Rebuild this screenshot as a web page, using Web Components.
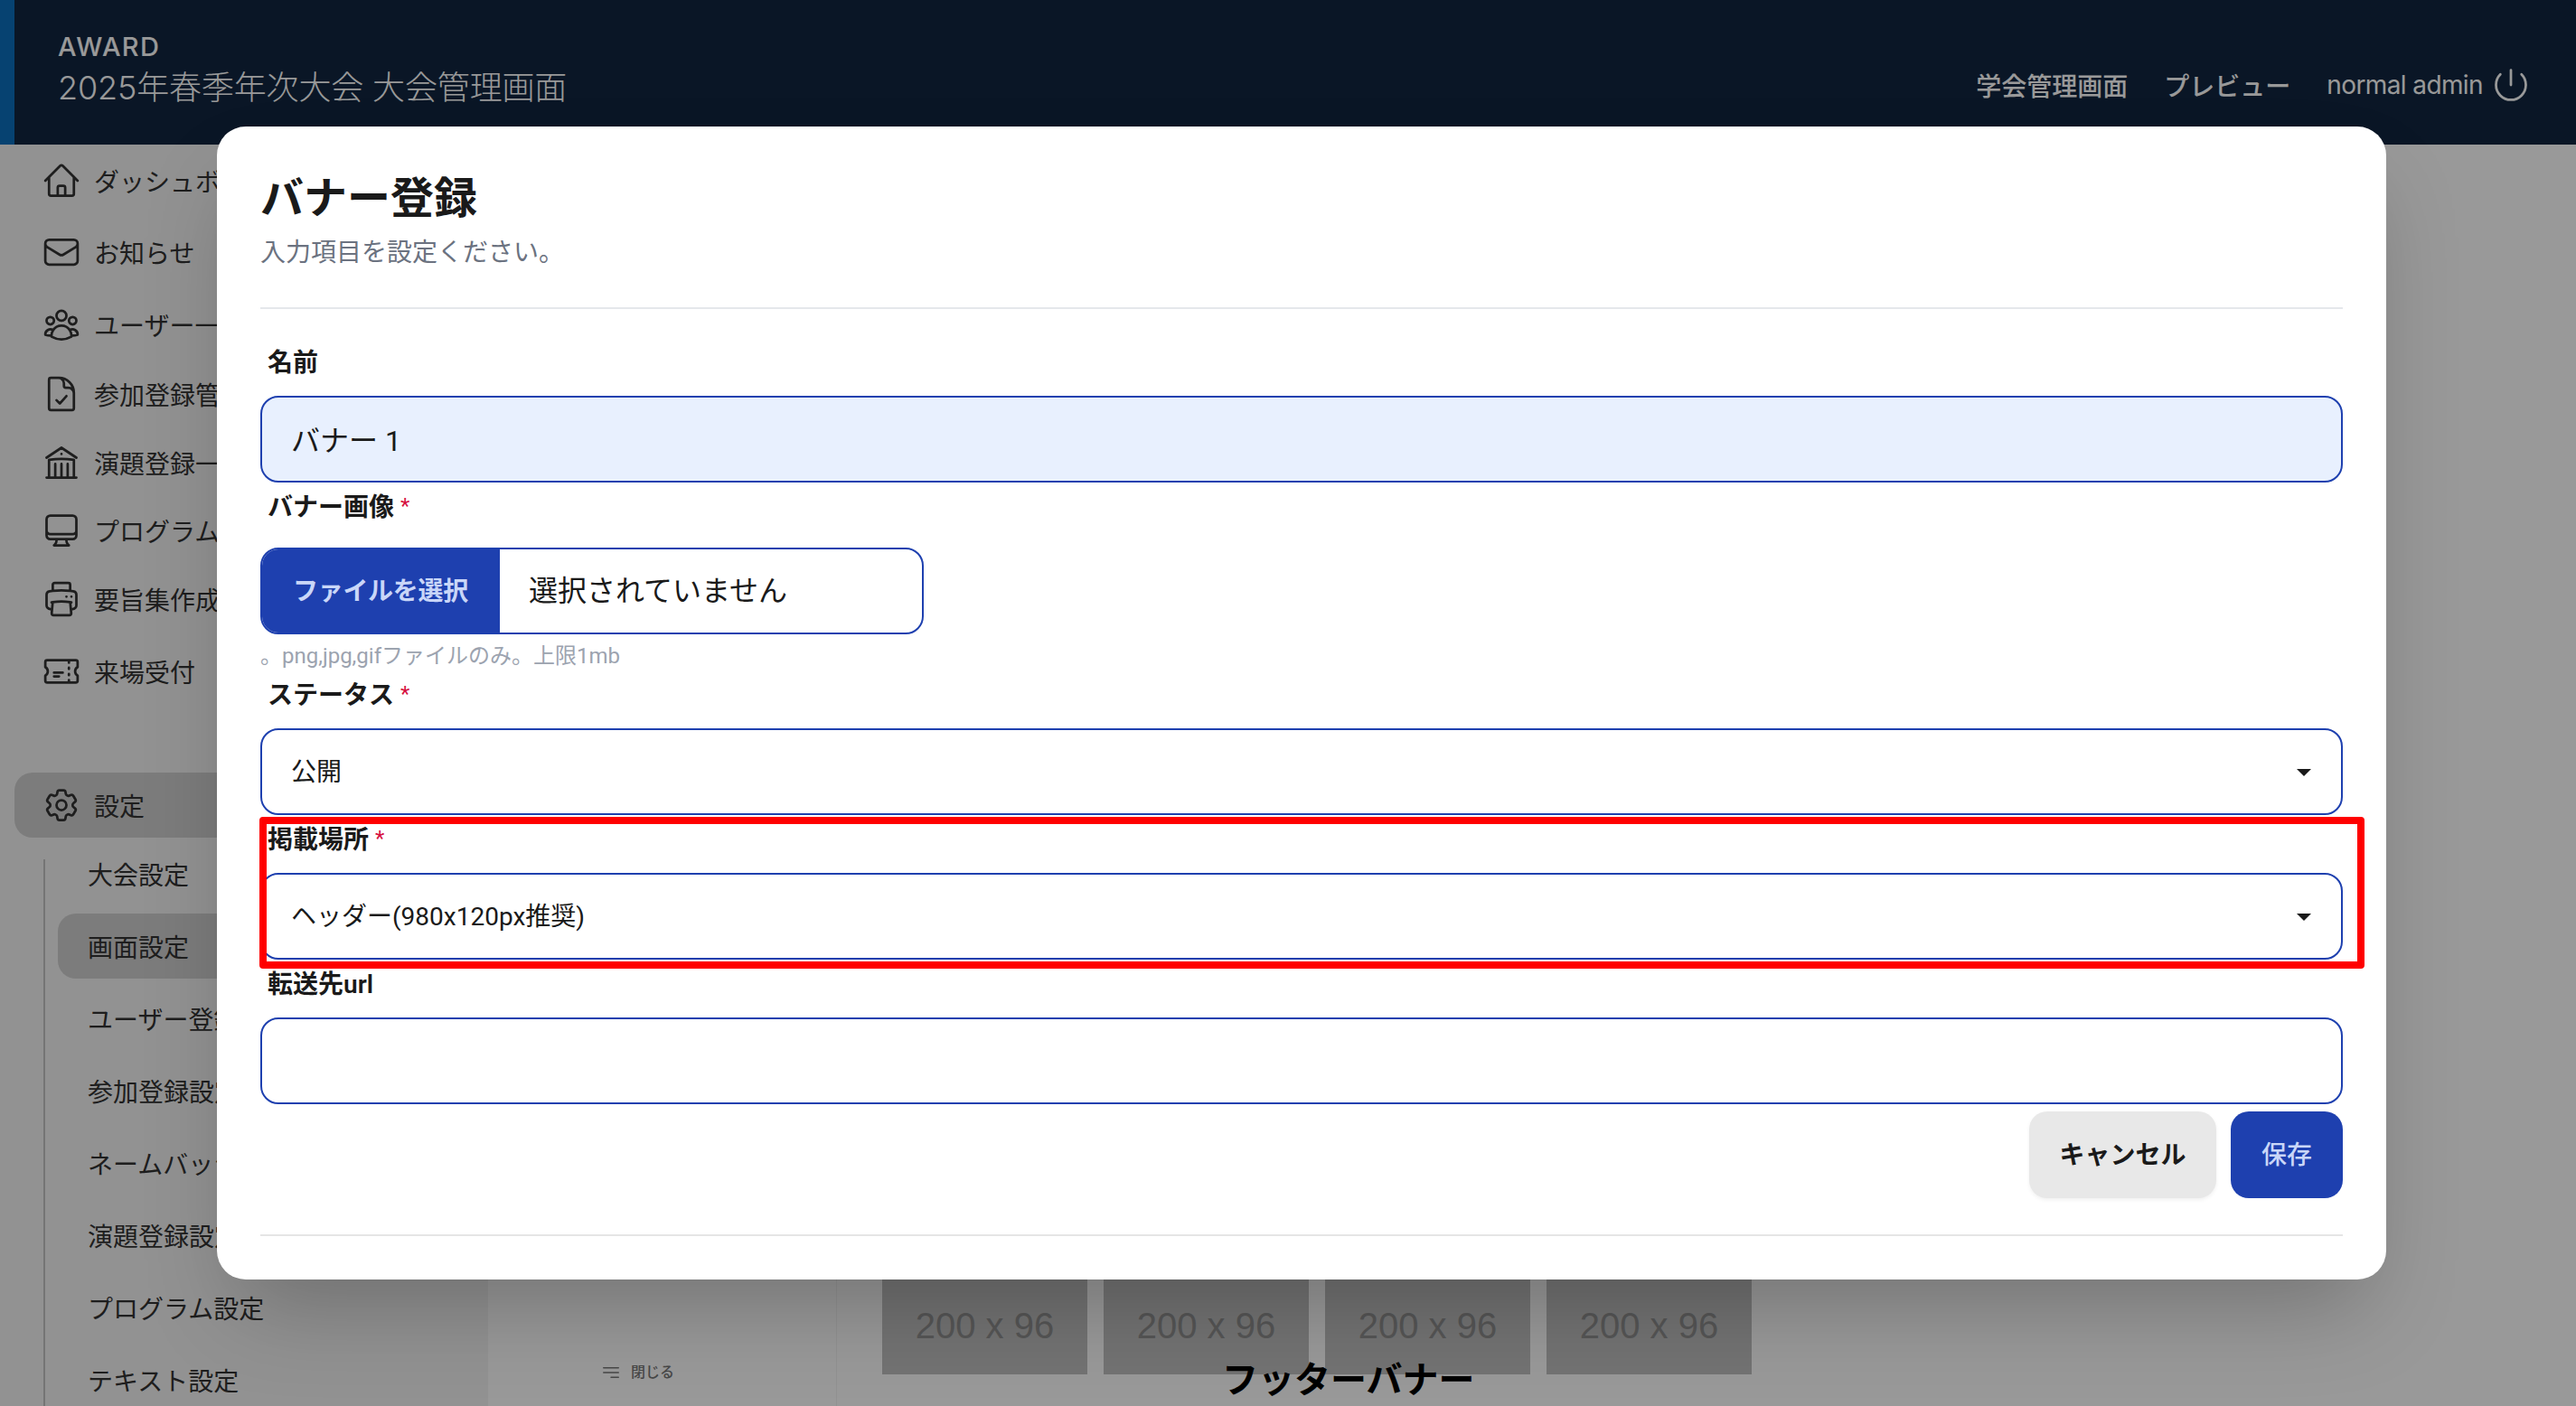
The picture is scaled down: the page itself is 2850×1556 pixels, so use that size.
<!DOCTYPE html>
<html lang="ja">
<head>
<meta charset="utf-8">
<title>バナー登録</title>
<style>
html,body{margin:0;padding:0;background:#fff}
body{font-family:Roboto,"Noto Sans CJK JP",sans-serif;width:2850px;height:1556px;overflow:hidden}
</style>
</head>
<body>
<admin-page>
  <app-header slot="header"></app-header>
  <app-sidebar slot="sidebar">
    <nav-item icon="home" style="--mt:0px">ダッシュボード</nav-item>
    <nav-item icon="mail" style="--mt:7px">お知らせ</nav-item>
    <nav-item icon="users" style="--mt:8px">ユーザー一覧</nav-item>
    <nav-item icon="doc" style="--mt:5px">参加登録管理</nav-item>
    <nav-item icon="bank" style="--mt:4px">演題登録一覧</nav-item>
    <nav-item icon="desktop" style="--mt:3px">プログラム管理</nav-item>
    <nav-item icon="printer" style="--mt:4px">要旨集作成</nav-item>
    <nav-item icon="ticket" style="--mt:8px">来場受付</nav-item>
    <nav-item icon="cog" active style="--mt:76px">設定</nav-item>
    <sub-nav>
      <sub-item style="--h:32px;--mb:28px">大会設定</sub-item>
      <sub-item active>画面設定</sub-item>
      <sub-item>ユーザー登録設定</sub-item>
      <sub-item>参加登録設定</sub-item>
      <sub-item>ネームバッジ設定</sub-item>
      <sub-item>演題登録設定</sub-item>
      <sub-item>プログラム設定</sub-item>
      <sub-item>テキスト設定</sub-item>
    </sub-nav>
  </app-sidebar>
  <side-panel slot="panel"></side-panel>
  <banner-area slot="main">
    <banner-ph>200 x 96</banner-ph>
    <banner-ph>200 x 96</banner-ph>
    <banner-ph>200 x 96</banner-ph>
    <banner-ph>200 x 96</banner-ph>
    <span slot="title">フッターバナー</span>
  </banner-area>
  <modal-dialog slot="modal" heading="バナー登録" sub="入力項目を設定ください。">
    <form-field label="名前"><text-box filled>バナー 1</text-box></form-field>
    <form-field label="バナー画像" required gap hint="。png,jpg,gifファイルのみ。上限1mb"><file-box></file-box></form-field>
    <form-field label="ステータス" required><select-box>公開</select-box></form-field>
    <form-field label="掲載場所" required marked><select-box>ヘッダー(980x120px推奨)</select-box></form-field>
    <form-field label="転送先url"><text-box></text-box></form-field>
    <action-btn slot="actions">キャンセル</action-btn>
    <action-btn slot="actions" primary>保存</action-btn>
  </modal-dialog>
</admin-page>

<script>
const ICONS = {
  home:'<path d="M2.25 12l8.954-8.955c.44-.439 1.152-.439 1.591 0L21.75 12M4.5 9.75v10.125c0 .621.504 1.125 1.125 1.125H9.75v-4.875c0-.621.504-1.125 1.125-1.125h2.25c.621 0 1.125.504 1.125 1.125V21h4.125c.621 0 1.125-.504 1.125-1.125V9.75M8.25 21h8.25"/>',
  mail:'<path d="M21.75 6.75v10.5a2.25 2.25 0 01-2.25 2.25h-15a2.25 2.25 0 01-2.25-2.25V6.75m19.5 0A2.25 2.25 0 0019.5 4.5h-15a2.25 2.25 0 00-2.25 2.25m19.5 0v.243a2.25 2.25 0 01-1.07 1.916l-7.5 4.615a2.25 2.25 0 01-2.36 0L3.32 8.91a2.25 2.25 0 01-1.07-1.916V6.75"/>',
  users:'<path d="M18 18.72a9.094 9.094 0 003.741-.479 3 3 0 00-4.682-2.72m.94 3.198l.001.031c0 .225-.012.447-.037.666A11.944 11.944 0 0112 21c-2.17 0-4.207-.576-5.963-1.584A6.062 6.062 0 016 18.719m12 0a5.971 5.971 0 00-.941-3.197m0 0A5.995 5.995 0 0012 12.75a5.995 5.995 0 00-5.058 2.772m0 0a3 3 0 00-4.681 2.72 8.986 8.986 0 003.74.477m.94-3.197a5.971 5.971 0 00-.94 3.197M15 6.75a3 3 0 11-6 0 3 3 0 016 0zm6 3a2.25 2.25 0 11-4.5 0 2.25 2.25 0 014.5 0zm-13.5 0a2.25 2.25 0 11-4.5 0 2.25 2.25 0 014.5 0z"/>',
  doc:'<path d="M10.125 2.25h-4.5c-.621 0-1.125.504-1.125 1.125v17.25c0 .621.504 1.125 1.125 1.125h12.75c.621 0 1.125-.504 1.125-1.125v-9M10.125 2.25h.375a9 9 0 019 9v.375M10.125 2.25A3.375 3.375 0 0113.5 5.625v1.5c0 .621.504 1.125 1.125 1.125h1.5a3.375 3.375 0 013.375 3.375M9 15.75l2 2 4-4.5"/>',
  bank:'<path d="M12 21v-8.25M15.75 21v-8.25M8.25 21v-8.25M3 9l9-6 9 6m-1.5 12V10.332A48.36 48.36 0 0012 9.75c-2.551 0-5.056.2-7.5.582V21M3 21h18M12 6.75h.008v.008H12V6.75z"/>',
  desktop:'<path d="M9 17.25v1.007a3 3 0 01-.879 2.122L7.5 21h9l-.621-.621A3 3 0 0115 18.257V17.25m6-12V15a2.25 2.25 0 01-2.25 2.25H5.25A2.25 2.25 0 013 15V5.25m18 0A2.25 2.25 0 0018.75 3H5.25A2.25 2.25 0 003 5.25m18 0V12a2.25 2.25 0 01-2.25 2.25H5.25A2.25 2.25 0 013 12V5.25"/>',
  printer:'<path d="M6.72 13.829c-.24.03-.48.062-.72.096m.72-.096a42.415 42.415 0 0110.56 0m-10.56 0L6.34 18m10.94-4.171c.24.03.48.062.72.096m-.72-.096L17.66 18m0 0l.229 2.523a1.125 1.125 0 01-1.12 1.227H7.231c-.662 0-1.18-.568-1.12-1.227L6.34 18m11.318 0h1.091A2.25 2.25 0 0021 15.75V9.456c0-1.081-.768-2.015-1.837-2.175a48.055 48.055 0 00-1.913-.247M6.34 18H5.25A2.25 2.25 0 013 15.75V9.456c0-1.081.768-2.015 1.837-2.175a48.041 48.041 0 011.913-.247m10.5 0a48.536 48.536 0 00-10.5 0m10.5 0V3.375c0-.621-.504-1.125-1.125-1.125h-8.25c-.621 0-1.125.504-1.125 1.125v3.659M18 10.5h.008v.008H18V10.5zm-3 0h.008v.008H15V10.5z"/>',
  ticket:'<path d="M16.5 6v.75m0 3v.75m0 3v.75m0 3V18m-9-5.25h5.25M7.5 15h3M3.375 5.25c-.621 0-1.125.504-1.125 1.125v3.026a2.999 2.999 0 010 5.198v3.026c0 .621.504 1.125 1.125 1.125h17.25c.621 0 1.125-.504 1.125-1.125v-3.026a2.999 2.999 0 010-5.198V6.375c0-.621-.504-1.125-1.125-1.125H3.375z"/>',
  cog:'<path d="M9.594 3.94c.09-.542.56-.94 1.11-.94h2.593c.55 0 1.02.398 1.11.94l.213 1.281c.063.374.313.686.645.87.074.04.147.083.22.127.324.196.72.257 1.075.124l1.217-.456a1.125 1.125 0 011.37.49l1.296 2.247a1.125 1.125 0 01-.26 1.431l-1.003.827c-.293.24-.438.613-.431.992a6.759 6.759 0 010 .255c-.007.378.138.75.43.99l1.005.828c.424.35.534.954.26 1.43l-1.298 2.247a1.125 1.125 0 01-1.369.491l-1.217-.456c-.355-.133-.75-.072-1.076.124a6.57 6.57 0 01-.22.128c-.331.183-.581.495-.644.869l-.213 1.28c-.09.543-.56.941-1.11.941h-2.594c-.55 0-1.02-.398-1.11-.94l-.213-1.281c-.062-.374-.312-.686-.644-.87a6.52 6.52 0 01-.22-.127c-.325-.196-.72-.257-1.076-.124l-1.217.456a1.125 1.125 0 01-1.369-.49l-1.297-2.247a1.125 1.125 0 01.26-1.431l1.004-.827c.292-.24.437-.613.43-.992a6.932 6.932 0 010-.255c.007-.378-.138-.75-.43-.99l-1.004-.828a1.125 1.125 0 01-.26-1.43l1.297-2.247a1.125 1.125 0 011.37-.491l1.216.456c.356.133.751.072 1.076-.124.072-.044.146-.087.22-.128.332-.183.582-.495.644-.869l.214-1.281z"/><path d="M15 12a3 3 0 11-6 0 3 3 0 016 0z"/>',
  power:'<path d="M5.636 5.636a9 9 0 1012.728 0M12 3v9"/>',
  bars:'<path d="M3.75 6.75h16.5M3.75 12h16.5M12 17.25h8.25"/>'
};
const svg = (n, s) => `<svg xmlns="http://www.w3.org/2000/svg" width="${s}" height="${s}" viewBox="0 0 24 24" fill="none" stroke="currentColor" stroke-width="1.5" stroke-linecap="round" stroke-linejoin="round" style="display:block;flex:none">${ICONS[n]}</svg>`;

class Base extends HTMLElement {
  connectedCallback() {
    if (this.shadowRoot) return;
    this.attachShadow({mode:'open'}).innerHTML = this.view();
  }
}
const def = (name, fn) => customElements.define(name, class extends Base { view() { return fn(this); } });

def('admin-page', () => `<style>
  :host{display:grid;position:relative;width:2850px;height:1556px;overflow:hidden;
    grid-template-columns:540px 386px 1fr;grid-template-rows:160px 1396px;color:#333}
  ::slotted([slot=header]){grid-column:1/-1}
  .overlay{position:absolute;inset:0;padding-left:30px;box-sizing:border-box;background:rgba(0,0,0,.4);display:flex;align-items:center;justify-content:center}
</style>
<slot name="header"></slot>
<slot name="sidebar"></slot>
<slot name="panel"></slot>
<slot name="main"></slot>
<div class="overlay"><slot name="modal"></slot></div>`);

def('app-header', () => `<style>
  :host{display:flex;justify-content:space-between;height:160px;box-sizing:border-box;background:#112640;border-left:16px solid #0a6ebd;color:#fff}
  .brand{padding:36px 0 0 48px}
  .logo{font:500 29px/32px Inter,sans-serif;letter-spacing:1.4px;height:32px}
  .title{font:300 36px/54px Inter,"Noto Sans CJK JP",sans-serif;margin-top:2px;white-space:pre;letter-spacing:-.15px}
  .right{display:flex;align-items:center;padding:28px 50px 0 0;font-size:28px;font-weight:500}
  .right a{margin-right:40px}
  .user{font:400 28px Inter,sans-serif;letter-spacing:-.6px;margin-right:9px}
</style>
<div class="brand"><div class="logo">AWARD</div><div class="title">2025年春季年次大会 大会管理画面</div></div>
<div class="right"><a>学会管理画面</a><a>プレビュー</a><span class="user">normal admin</span>${svg('power',44)}</div>`);

def('app-sidebar', () => `<style>
  :host{display:block;background:#f3f3f3;padding-top:4px;overflow:hidden;box-sizing:border-box}
</style><slot></slot>`);

def('nav-item', el => `<style>
  :host{display:flex;align-items:center;height:72px;margin:var(--mt,0) 16px 0 16px;padding-left:30px;border-radius:20px;font-size:28px;white-space:nowrap;color:#333;gap:14px}
  :host([active]){background:#cfcfcf}
</style>${svg(el.getAttribute('icon'),44)}<slot></slot>`);

def('sub-nav', () => `<style>
  :host{display:block;margin:24px 0 0 48px;padding-left:14px;border-left:2px solid #c4c4c4}
</style><slot></slot>`);

def('sub-item', () => `<style>
  :host{display:flex;align-items:center;height:var(--h,72px);margin:0 16px var(--mb,8px) 0;padding-left:33px;border-radius:20px;font-size:28px;white-space:nowrap;color:#333}
  :host([active]){background:#cfcfcf}
</style><slot></slot>`);

def('side-panel', () => `<style>
  :host{display:flex;align-items:flex-end;box-sizing:border-box;background:#fff;border-right:1px solid #f2f2f2;padding:0 0 25px 124px;gap:10px;font-size:16px;line-height:24px;font-weight:500;color:#777}
</style>${svg('bars',24)}<span>閉じる</span>`);

def('banner-area', () => `<style>
  :host{display:block;background:#fff;padding:1253px 0 0 50px;overflow:hidden}
  .row{display:flex;gap:18px}
  .title{margin:-13px 0 0 376px;font-size:40px;line-height:40px;font-weight:700;color:#000;position:relative}
</style><div class="row"><slot></slot></div><div class="title"><slot name="title"></slot></div>`);

def('banner-ph', () => `<style>
  :host{display:flex;align-items:center;justify-content:center;width:227px;height:108px;background:#c0c0c0;color:#8f8f8f;font:40px "Liberation Sans",sans-serif}
</style><slot></slot>`);

def('modal-dialog', el => `<style>
  :host{display:block;box-sizing:border-box;width:2400px;background:#fff;border-radius:32px;padding:48px;color:#1a1a1a;
    box-shadow:0 50px 100px -24px rgba(0,0,0,.25)}
  h2{margin:0;font-size:48px;line-height:64px;font-weight:700}
  p{margin:8px 0 0;font-size:28px;line-height:40px;color:#6b7280}
  hr{margin:40px 0 32px;border:0;height:2px;background:#e5e7eb}
  .actions{display:flex;justify-content:flex-end;gap:16px;margin-top:8px}
  .end{height:2px;background:#e5e5e5;margin-top:40px}
</style>
<h2>${el.getAttribute('heading')}</h2><p>${el.getAttribute('sub')}</p><hr>
<slot></slot>
<div class="actions"><slot name="actions"></slot></div>
<div class="end"></div>`);

def('form-field', el => `<style>
  :host{display:block;position:relative}
  .label{display:flex;align-items:center;height:40px;margin-bottom:16px;padding:8px 0 0 8px;font-size:28px;line-height:40px;font-weight:600;color:#1a1a1a}
  :host([gap]) .label{margin-bottom:24px}
  .req{color:#d6103f;margin:-4px 0 0 7px;font-size:24px;font-weight:400}
  .hint{height:40px;box-sizing:border-box;padding-top:8px;font-size:24px;line-height:32px;font-weight:400;color:#9ca3af;white-space:nowrap;overflow:hidden}
  .mark{position:absolute;top:2px;left:-1px;right:-24px;bottom:-10px;border:8px solid #f00;border-radius:4px;pointer-events:none}
</style>
<div class="label"><span>${el.getAttribute('label')}</span>${el.hasAttribute('required')?'<span class="req">*</span>':''}</div>
<slot></slot>
${el.hasAttribute('hint')?`<div class="hint">${el.getAttribute('hint')}</div>`:''}
${el.hasAttribute('marked')?'<div class="mark"></div>':''}`);

const boxCss = `:host{display:flex;align-items:center;height:96px;box-sizing:border-box;border:2px solid #1e40af;border-radius:20px;background:#fff;padding:0 32px;color:#1a1a1a}`;
def('text-box', () => `<style>${boxCss}
  :host{font-size:32px;font-weight:400}
  :host([filled]){background:#e8f0fe}
</style><span style="margin-top:-3px"><slot></slot></span>`);

def('select-box', () => `<style>${boxCss}
  :host{font-size:28px;font-weight:400;justify-content:space-between;padding-right:33px}
  span{margin-top:-5px}
  svg{display:block;margin-top:2px}
</style><span><slot></slot></span><svg width="16" height="8" viewBox="0 0 16 8"><path d="M0 0h16L8 8z" fill="#1a1a1a"/></svg>`);

def('file-box', () => `<style>${boxCss}
  :host{width:734px;padding:0;overflow:hidden}
  .btn{display:flex;align-items:center;height:100%;width:263px;box-sizing:border-box;padding-left:34px;background:#1e40af;color:#c9d6f8;font-size:28px;font-weight:600;white-space:nowrap;letter-spacing:-.3px}
  .btn span{margin-top:-4px}
  .name{padding-left:32px;font-size:32px;font-weight:400;white-space:nowrap;margin-top:-7px}
</style><div class="btn"><span>ファイルを選択</span></div><div class="name">選択されていません</div>`);

def('action-btn', () => `<style>
  :host{display:flex;align-items:center;justify-content:center;height:96px;padding:0 33.5px;border-radius:20px;background:#e8e8e8;color:#1a1a1a;font-size:28px;font-weight:600;box-shadow:0 2px 4px rgba(0,0,0,.06)}
  :host([primary]){background:#1e40af;color:#c9d6f8;font-weight:500;box-shadow:none;padding:0 34px}
  span{margin-top:-5px}
</style><span><slot></slot></span>`);
</script>
</body>
</html>
